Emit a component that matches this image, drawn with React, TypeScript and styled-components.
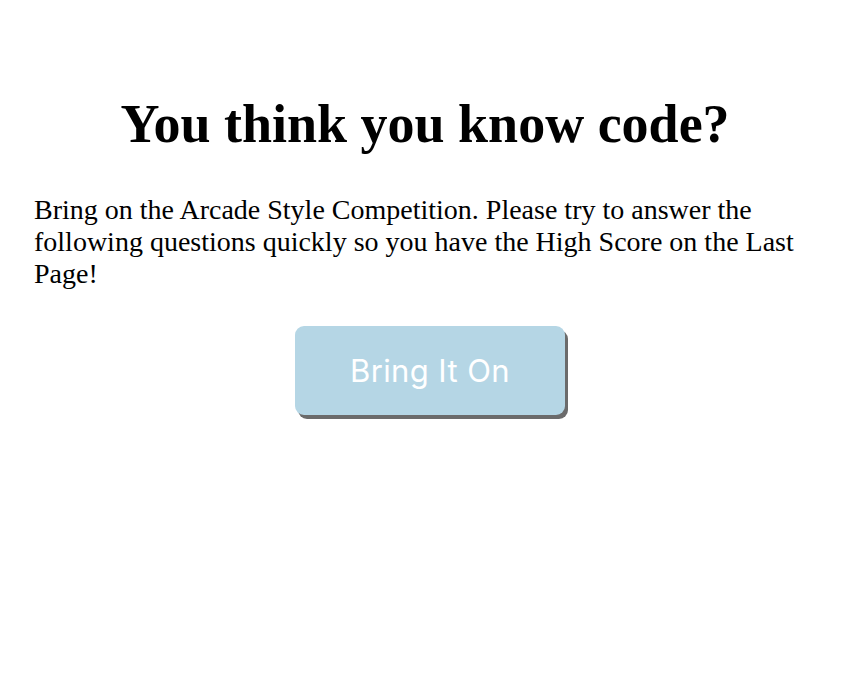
import React from "react";
import styled, { createGlobalStyle } from "styled-components";

const Global = createGlobalStyle`
  html, body { margin: 0; padding: 0; background: #fff; }
  body { font-family: "Liberation Serif", "Times New Roman", serif; color: #000; }
`;

const Page = styled.main`
  display: flex;
  flex-direction: column;
  align-items: stretch;
  padding: 88px 34px 40px;
`;

const Title = styled.h1`
  margin: 0;
  text-align: center;
  font-size: 54px;
  font-weight: 700;
  line-height: 72px;
`;

const Intro = styled.p`
  margin: 34px 0 0;
  font-size: 28px;
  line-height: 32px;
`;

const Actions = styled.div`
  display: flex;
  justify-content: center;
  padding-left: 10px;
  margin-top: 36px;
`;

const StartButton = styled.button`
  width: 270px;
  height: 89px;
  border: none;
  border-radius: 9px;
  background: #b5d6e5;
  color: #fff;
  font-family: Inter, "Noto Sans", sans-serif;
  font-size: 31px;
  letter-spacing: 0.4px;
  box-shadow: 3px 4px 0 #6b6b6b;
  cursor: pointer;
`;

export default function App() {
  return (
    <>
      <Global />
      <Page>
        <Title>You think you know code?</Title>
        <Intro>
          Bring on the Arcade Style Competition. Please try to answer the
          following questions quickly so you have the High Score on the Last
          Page!
        </Intro>
        <Actions>
          <StartButton>Bring It On</StartButton>
        </Actions>
      </Page>
    </>
  );
}
